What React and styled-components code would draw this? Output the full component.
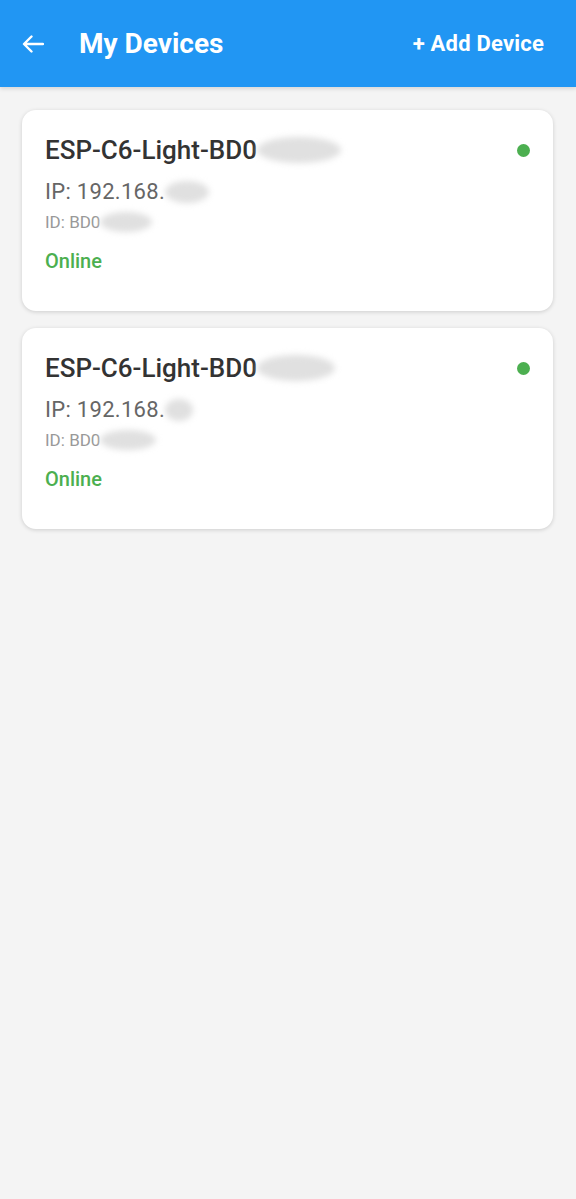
import React from "react";
import styled, { createGlobalStyle } from "styled-components";

const GlobalStyle = createGlobalStyle`
  html, body {
    margin: 0;
    padding: 0;
    background: #f4f4f4;
    font-family: Roboto, "Noto Sans", Arial, sans-serif;
  }
`;

// blurs = redacted tail widths for name / ip / id
const devices = [
  { name: "ESP-C6-Light-BD0", ip: "192.168.", id: "BD0", blurs: [84, 44, 52] },
  { name: "ESP-C6-Light-BD0", ip: "192.168.", id: "BD0", blurs: [78, 28, 56] },
];

const Page = () => (
  <>
    <GlobalStyle />
    <Screen>
      <Header>
        <BackButton aria-label="back">
          <svg width="22" height="18" viewBox="0 0 22 18" fill="none">
            <path
              d="M21 9H2.5M9.5 1.5L2 9l7.5 7.5"
              stroke="white"
              strokeWidth="2.4"
              strokeLinecap="round"
              strokeLinejoin="round"
            />
          </svg>
        </BackButton>
        <Title>My Devices</Title>
        <AddButton>+ Add Device</AddButton>
      </Header>
      <List>
        {devices.map((d, i) => (
          <Card key={i}>
            <TopRow>
              <DeviceName>
                {d.name}
                <Blur $w={d.blurs[0]} $h={26} />
              </DeviceName>
              <Dot />
            </TopRow>
            <Ip>
              IP: {d.ip}
              <Blur $w={d.blurs[1]} $h={22} />
            </Ip>
            <DeviceId>
              ID: {d.id}
              <Blur $w={d.blurs[2]} $h={20} />
            </DeviceId>
            <Status>Online</Status>
          </Card>
        ))}
      </List>
    </Screen>
  </>
);

const Screen = styled.div`
  min-height: 1199px;
  background: #f4f4f4;
`;

const Header = styled.header`
  height: 87px;
  background-color: #2196f3;
  display: flex;
  align-items: center;
  padding: 0 32px 0 22px;
  box-sizing: border-box;
  box-shadow: 0 2px 4px rgba(0, 0, 0, 0.12);
  color: white;
`;

const BackButton = styled.div`
  width: 28px;
  height: 28px;
  display: flex;
  align-items: center;
  justify-content: flex-start;
  margin-right: 29px;
`;

const Title = styled.h1`
  flex: 1;
  margin: 0;
  font-size: 28px;
  font-weight: 700;
`;

const AddButton = styled.button`
  background: none;
  border: none;
  padding: 0;
  color: white;
  font-family: inherit;
  font-size: 22px;
  font-weight: 700;
  letter-spacing: 0.2px;
`;

const List = styled.div`
  display: flex;
  flex-direction: column;
  gap: 17px;
  padding: 23px 23px 0 22px;
`;

const Card = styled.div`
  background: white;
  border-radius: 14px;
  box-shadow: 0 1px 4px rgba(0, 0, 0, 0.16);
  height: 201px;
  box-sizing: border-box;
  padding: 25px 23px 0 23px;
  display: flex;
  flex-direction: column;
`;

const TopRow = styled.div`
  display: flex;
  align-items: center;
  justify-content: space-between;
`;

const DeviceName = styled.div`
  font-size: 26px;
  font-weight: 500;
  color: #333;
  line-height: 30px;
  display: flex;
  align-items: center;
`;

const Dot = styled.span`
  width: 13px;
  height: 13px;
  border-radius: 50%;
  background: #4caf50;
`;

const Ip = styled.div`
  font-size: 22px;
  letter-spacing: 0.3px;
  color: #666;
  line-height: 26px;
  margin-top: 14px;
  display: flex;
  align-items: center;
`;

const DeviceId = styled.div`
  font-size: 17px;
  color: #999;
  line-height: 22px;
  margin-top: 6px;
  display: flex;
  align-items: center;
`;

const Status = styled.div`
  font-size: 20px;
  font-weight: 500;
  color: #4caf50;
  line-height: 26px;
  margin-top: 15px;
`;

const Blur = styled.span`
  display: inline-block;
  width: ${(p) => p.$w}px;
  height: ${(p) => p.$h}px;
  border-radius: 50%;
  background: #e0e0e0;
  filter: blur(3px);
`;

export default Page;
